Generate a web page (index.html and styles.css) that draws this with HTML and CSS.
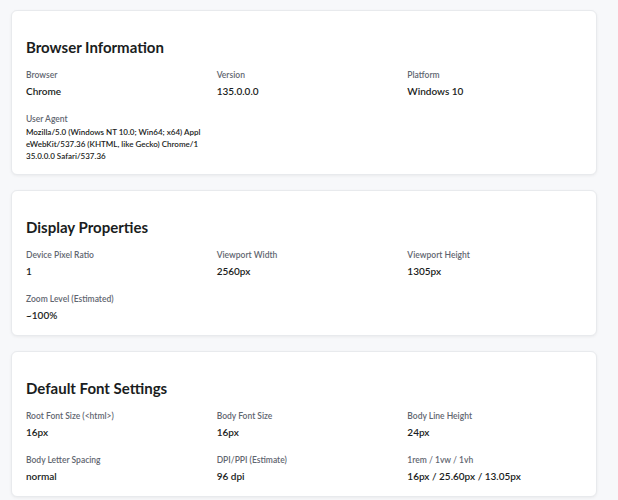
FILE: index.html
```html
<!DOCTYPE html>
<html lang="en">
<head>
    <meta charset="UTF-8">
    <meta name="viewport" content="width=device-width, initial-scale=1.0">
    <title>Browser Information</title>
    <link rel="stylesheet" href="styles.css">
</head>
<body>
    <main class="container">
        <section class="card">
            <h2>Browser Information</h2>
            <div class="info-grid">
                <div class="info-item">
                    <div class="info-label">Browser</div>
                    <div class="info-value">Chrome</div>
                </div>
                <div class="info-item">
                    <div class="info-label">Version</div>
                    <div class="info-value">135.0.0.0</div>
                </div>
                <div class="info-item">
                    <div class="info-label">Platform</div>
                    <div class="info-value">Windows 10</div>
                </div>
                <div class="info-item">
                    <div class="info-label">User Agent</div>
                    <div class="info-value small">Mozilla/5.0 (Windows NT 10.0; Win64; x64) AppleWebKit/537.36 (KHTML, like Gecko) Chrome/135.0.0.0 Safari/537.36</div>
                </div>
            </div>
        </section>

        <section class="card">
            <h2>Display Properties</h2>
            <div class="info-grid">
                <div class="info-item">
                    <div class="info-label">Device Pixel Ratio</div>
                    <div class="info-value">1</div>
                </div>
                <div class="info-item">
                    <div class="info-label">Viewport Width</div>
                    <div class="info-value">2560px</div>
                </div>
                <div class="info-item">
                    <div class="info-label">Viewport Height</div>
                    <div class="info-value">1305px</div>
                </div>
                <div class="info-item">
                    <div class="info-label">Zoom Level (Estimated)</div>
                    <div class="info-value">~100%</div>
                </div>
            </div>
        </section>

        <section class="card">
            <h2>Default Font Settings</h2>
            <div class="info-grid">
                <div class="info-item">
                    <div class="info-label">Root Font Size (&lt;html&gt;)</div>
                    <div class="info-value">16px</div>
                </div>
                <div class="info-item">
                    <div class="info-label">Body Font Size</div>
                    <div class="info-value">16px</div>
                </div>
                <div class="info-item">
                    <div class="info-label">Body Line Height</div>
                    <div class="info-value">24px</div>
                </div>
                <div class="info-item">
                    <div class="info-label">Body Letter Spacing</div>
                    <div class="info-value">normal</div>
                </div>
                <div class="info-item">
                    <div class="info-label">DPI/PPI (Estimate)</div>
                    <div class="info-value">96 dpi</div>
                </div>
                <div class="info-item">
                    <div class="info-label">1rem / 1vw / 1vh</div>
                    <div class="info-value">16px / 25.60px / 13.05px</div>
                </div>
            </div>
        </section>
    </main>
</body>
</html>
```

FILE: styles.css
```css
body {
    font-family: Lato, 'Open Sans', sans-serif;
    margin: 0;
    padding: 10px 21px 10px 11px;
    background-color: #f7f8fa;
    color: #1a1d21;
}

.card {
    background-color: white;
    border: 1px solid #e8eaed;
    border-radius: 6px;
    box-shadow: 0 1px 3px rgba(0,0,0,0.06);
    padding: 25px 14px 12px;
    margin-bottom: 15px;
}

.card h2 {
    font-size: 15px;
    font-weight: 700;
    line-height: 22px;
    margin: 0 0 10px;
}

.info-grid {
    display: grid;
    grid-template-columns: repeat(3, 1fr);
    column-gap: 16px;
    row-gap: 13px;
}

.info-label {
    font-size: 8.5px;
    line-height: 14px;
    color: #5f6670;
    font-weight: 600;
}

.info-value {
    font-size: 10px;
    line-height: 16px;
    font-weight: 600;
    margin-top: 1px;
}

.info-value.small {
    font-size: 8px;
    line-height: 12px;
    word-break: break-all;
    margin-top: 0;
}
```
